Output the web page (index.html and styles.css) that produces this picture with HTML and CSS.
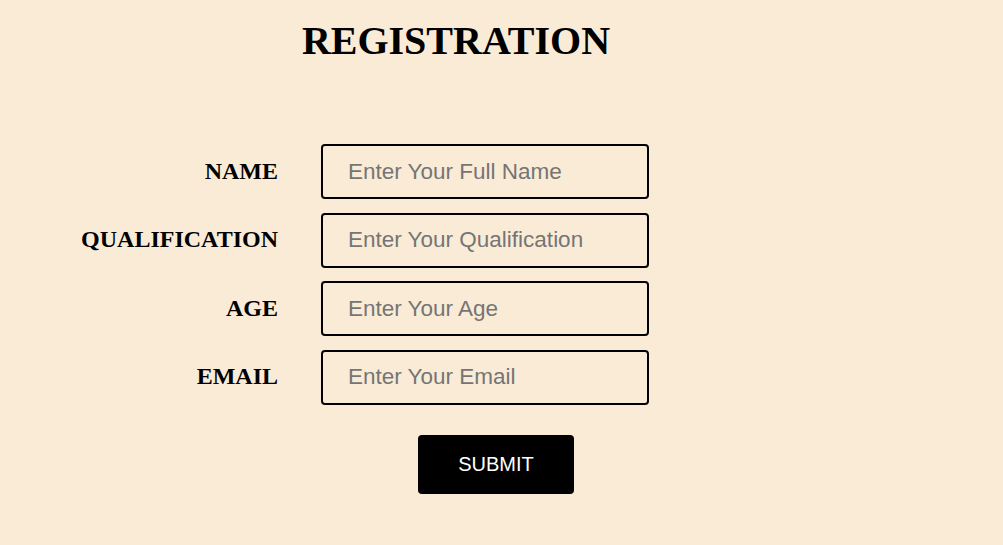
FILE: index.html
```html
<!DOCTYPE html>
<html lang="en">
<head>
<meta charset="utf-8">
<title>Registration</title>
<link rel="stylesheet" href="styles.css">
</head>
<body>
  <h1 class="title">REGISTRATION</h1>
  <form class="form">
    <div class="fields">
      <label class="label" for="name">NAME</label>
      <input class="field" id="name" type="text" placeholder="Enter Your Full Name">
      <label class="label" for="qual">QUALIFICATION</label>
      <input class="field" id="qual" type="text" placeholder="Enter Your Qualification" autofocus>
      <label class="label" for="age">AGE</label>
      <input class="field" id="age" type="text" placeholder="Enter Your Age">
      <label class="label" for="email">EMAIL</label>
      <input class="field" id="email" type="text" placeholder="Enter Your Email">
    </div>
    <div class="actions">
      <button class="submit" type="button">SUBMIT</button>
    </div>
  </form>
</body>
</html>
```
FILE: styles.css
```css
html, body {
  margin: 0;
  padding: 0;
  background: #faebd7;
}

body {
  font-family: "Liberation Serif", "Times New Roman", serif;
  color: #000;
}

.title {
  width: 912px;
  margin: 18px 0 0;
  text-align: center;
  font-size: 40px;
  font-weight: bold;
  line-height: 46px;
}

.form {
  margin-top: 80px;
}

.fields {
  display: grid;
  grid-template-columns: 278px 328px;
  column-gap: 43px;
  row-gap: 13.5px;
  align-items: center;
}

.label {
  justify-self: end;
  margin-bottom: 2px;
  font-size: 24px;
  font-weight: bold;
  line-height: 28px;
}

.field {
  box-sizing: border-box;
  width: 328px;
  height: 55px;
  margin: 0;
  padding: 0 0 0 25px;
  border: 2px solid #000;
  border-radius: 4px;
  background: transparent;
  font-family: "Liberation Sans", Arial, sans-serif;
  font-size: 22.5px;
  color: #000;
  outline: none;
}

.field::placeholder {
  color: #757575;
  opacity: 1;
}

.actions {
  display: flex;
  padding-left: 418px;
  margin-top: 30px;
}

.submit {
  width: 156px;
  height: 59px;
  border: none;
  border-radius: 4px;
  background: #000;
  color: #fff;
  font-family: "Liberation Sans", Arial, sans-serif;
  font-size: 20px;
  cursor: pointer;
}
```
